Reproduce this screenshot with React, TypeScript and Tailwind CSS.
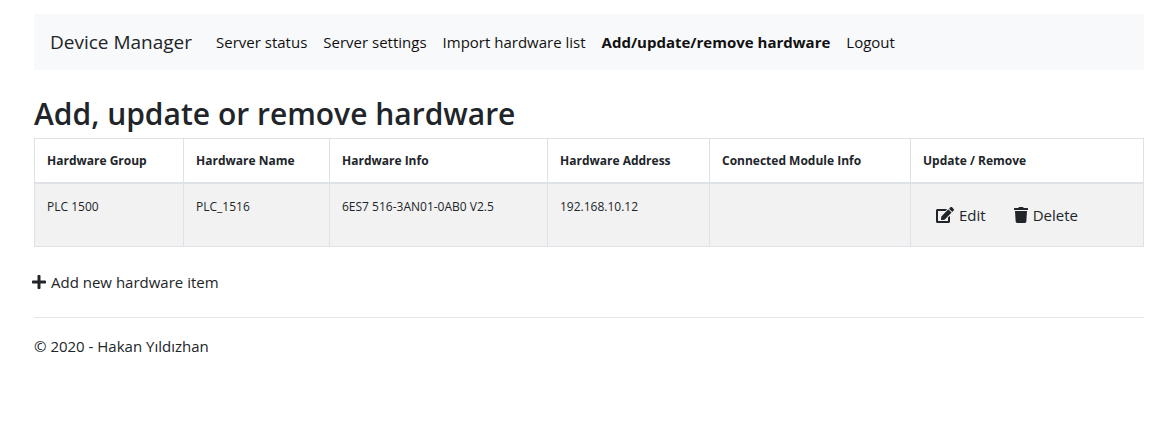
import { FaEdit, FaPlus, FaTrash } from "react-icons/fa";

const links = ["Server status", "Server settings", "Import hardware list", "Add/update/remove hardware", "Logout"];
const active = "Add/update/remove hardware";
const columns = [
  { title: "Hardware Group", width: "w-[149px]" },
  { title: "Hardware Name", width: "w-[146px]" },
  { title: "Hardware Info", width: "w-[218px]" },
  { title: "Hardware Address", width: "w-[162px]" },
  { title: "Connected Module Info", width: "w-[201px]" },
  { title: "Update / Remove", width: "" },
];
const cells = ["PLC 1500", "PLC_1516", "6ES7 516-3AN01-0AB0 V2.5", "192.168.10.12", ""];

export default function App() {
  return (
    <div className="min-h-screen bg-white pt-3.5 pr-[19px] pl-[34px] font-['Open_Sans','Noto_Sans',sans-serif] text-[15px] text-[#212529]">
      <nav className="flex h-14 items-center bg-[#f8f9fa] px-4">
        <a href="#" className="mr-6 text-[19px]">Device Manager</a>
        <ul className="flex gap-4">
          {links.map((link) => (
            <li key={link}>
              <a href="#" className={link === active ? "font-bold text-[#111111]" : "text-[#111111]"}>{link}</a>
            </li>
          ))}
        </ul>
      </nav>
      <main>
        <h1 className="mt-6 mb-1 text-[30px] leading-10 font-semibold">Add, update or remove hardware</h1>
        <table className="w-full table-fixed border-collapse text-left text-[12px]">
          <thead>
            <tr className="h-11">
              {columns.map(({ title, width }) => (
                <th key={title} className={`border border-b-2 border-[#dee2e6] px-3 pt-0.5 font-bold whitespace-nowrap ${width}`}>{title}</th>
              ))}
            </tr>
          </thead>
          <tbody>
            <tr className="h-16 bg-[#f2f2f2] align-top">
              {cells.map((cell, i) => (
                <td key={i} className="border border-[#dee2e6] px-3 pt-3.5">{cell}</td>
              ))}
              <td className="border border-[#dee2e6] px-[25px] pt-5 text-[15px]">
                <div className="flex gap-7">
                  <a href="#" className="flex items-center gap-[5px]"><FaEdit className="h-4 w-[18px]" />Edit</a>
                  <a href="#" className="flex items-center gap-[5px]"><FaTrash className="h-4 w-3.5" />Delete</a>
                </div>
              </td>
            </tr>
          </tbody>
        </table>
        <a href="#" className="mt-6 -ml-0.5 flex w-fit items-center gap-[5px]"><FaPlus className="h-4 w-3.5" />Add new hardware item</a>
      </main>
      <footer className="mt-[23px] border-t border-[#e5e5e5] pt-[17px]">© 2020 - Hakan Yıldızhan</footer>
    </div>
  );
}
